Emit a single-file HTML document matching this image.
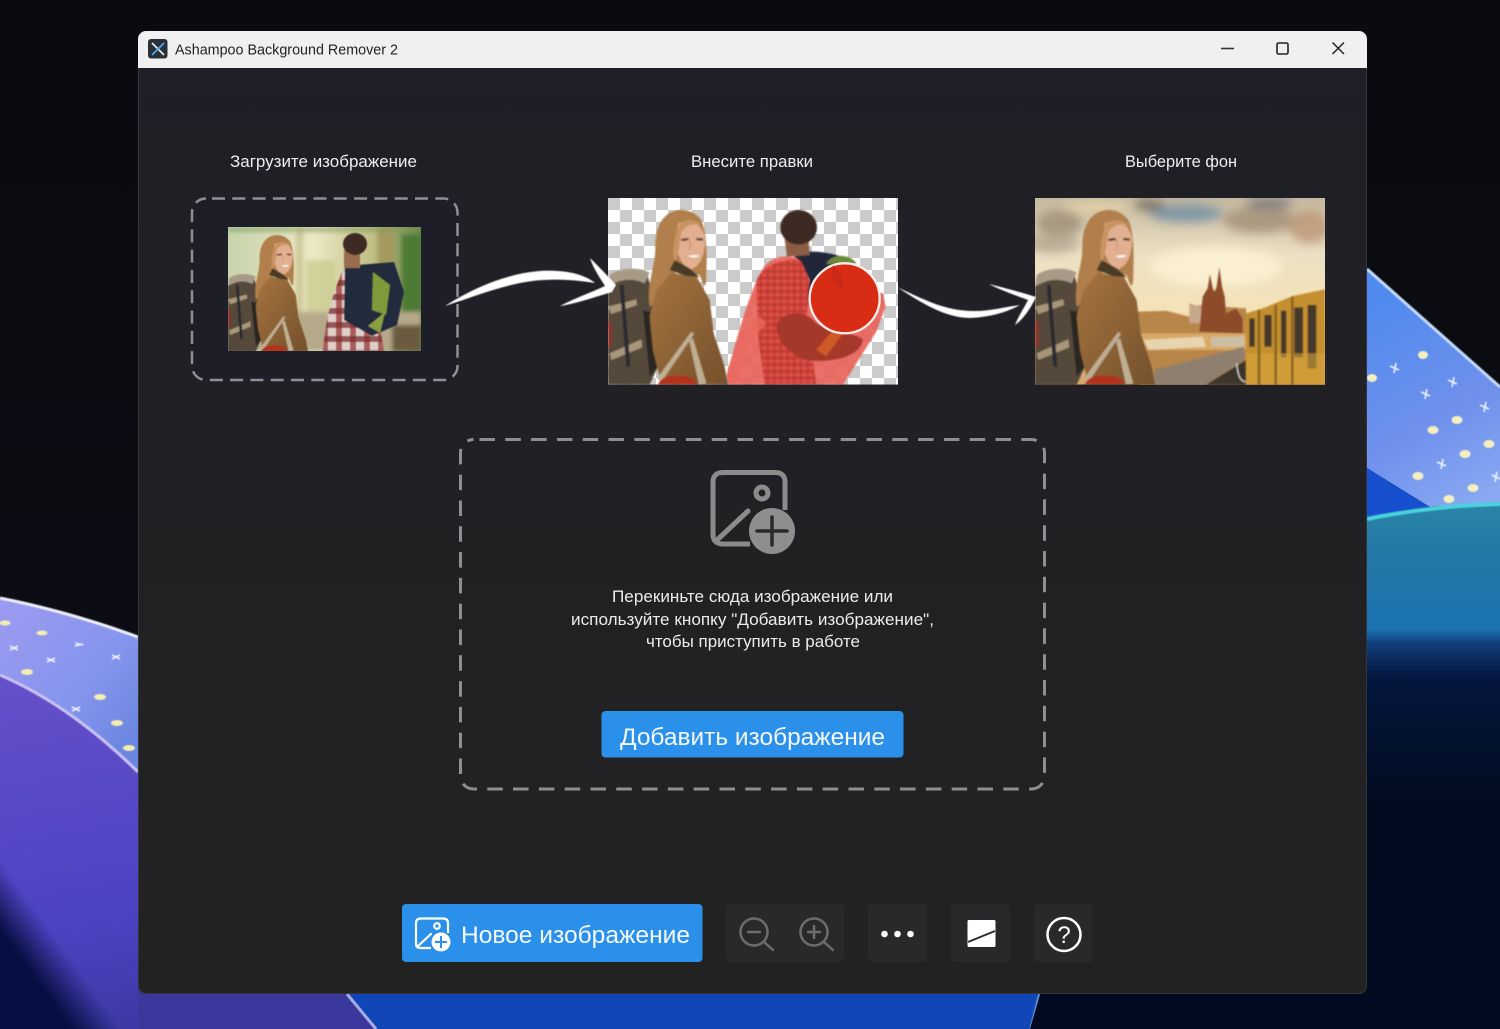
<!DOCTYPE html>
<html lang="ru"><head><meta charset="utf-8"><title>Ashampoo Background Remover 2</title>
<style>html,body{margin:0;padding:0;background:#0b0b12;width:1500px;height:1029px;overflow:hidden}svg{display:block}text{font-family:"Liberation Sans",sans-serif}</style></head>
<body>
<svg xmlns="http://www.w3.org/2000/svg" width="1500" height="1029" viewBox="0 0 1500 1029">
<defs>
<linearGradient id="bgd" x1="0" y1="0" x2="0" y2="1"><stop offset="0" stop-color="#0a0a10"/><stop offset=".6" stop-color="#0c0c14"/><stop offset="1" stop-color="#0a0a14"/></linearGradient>
<linearGradient id="rb" x1="1367" y1="300" x2="1480" y2="500" gradientUnits="userSpaceOnUse"><stop offset="0" stop-color="#4f8aef"/><stop offset=".6" stop-color="#6f90ec"/><stop offset="1" stop-color="#88a8f2"/></linearGradient>
<linearGradient id="rt" x1="0" y1="505" x2="0" y2="800" gradientUnits="userSpaceOnUse"><stop offset="0" stop-color="#2a84a8"/><stop offset=".15" stop-color="#2379a6"/><stop offset=".42" stop-color="#1c72b0"/><stop offset=".47" stop-color="#123e7c"/><stop offset=".58" stop-color="#04173f"/><stop offset="1" stop-color="#020c20"/></linearGradient>
<linearGradient id="lb" x1="0" y1="620" x2="138" y2="740" gradientUnits="userSpaceOnUse"><stop offset="0" stop-color="#9a9af0"/><stop offset=".6" stop-color="#8494ec"/><stop offset="1" stop-color="#6a86e0"/></linearGradient>
<linearGradient id="lp" x1="0" y1="690" x2="60" y2="1029" gradientUnits="userSpaceOnUse"><stop offset="0" stop-color="#6450c8"/><stop offset=".4" stop-color="#5648c6"/><stop offset=".7" stop-color="#4b43c2"/><stop offset="1" stop-color="#3d3aa8"/></linearGradient>
<linearGradient id="navy" x1="0" y1="930" x2="33.400" y2="906" gradientUnits="userSpaceOnUse"><stop offset="0" stop-color="#070e42"/><stop offset="1" stop-color="#070e42" stop-opacity="0"/></linearGradient>
<linearGradient id="win" x1="0" y1="0" x2="0" y2="1"><stop offset="0" stop-color="#1e1f27"/><stop offset=".4" stop-color="#212125"/><stop offset="1" stop-color="#222223"/></linearGradient>
<linearGradient id="jk" x1="0" y1="0" x2="1" y2="1"><stop offset="0" stop-color="#a6743f"/><stop offset="1" stop-color="#74502c"/></linearGradient>
<linearGradient id="sky" x1="0" y1="0" x2="0" y2="1"><stop offset="0" stop-color="#c4b8a0"/><stop offset=".3" stop-color="#ece0c4"/><stop offset=".6" stop-color="#f5e3b8"/><stop offset="1" stop-color="#d5a468"/></linearGradient>
<linearGradient id="for" x1="0" y1="0" x2="1" y2="0"><stop offset="0" stop-color="#c8d4ac"/><stop offset=".45" stop-color="#ece8c4"/><stop offset=".75" stop-color="#c0bf86"/><stop offset="1" stop-color="#5f8040"/></linearGradient>
<pattern id="chk" x="25" y="24" width="72" height="72" patternUnits="userSpaceOnUse"><rect width="72" height="72" fill="#fff"/><rect width="36" height="36" fill="#cbcbcb"/><rect x="36" y="36" width="36" height="36" fill="#cbcbcb"/></pattern>
<pattern id="plaid" width="14" height="14" patternUnits="userSpaceOnUse"><rect width="14" height="14" fill="#e0cfc8"/><rect width="6" height="14" fill="#9d3f3f" opacity=".8"/><rect width="14" height="6" fill="#7c2f30" opacity=".75"/></pattern>
<pattern id="plaidr" width="20" height="20" patternUnits="userSpaceOnUse"><rect width="20" height="20" fill="#e0483e"/><rect width="8" height="20" fill="#b9352c" opacity=".8"/><rect width="20" height="8" fill="#a92e28" opacity=".7"/></pattern>
<filter id="s1" x="-10%" y="-10%" width="120%" height="120%"><feGaussianBlur stdDeviation="2"/></filter>
<filter id="s2" x="-30%" y="-30%" width="160%" height="160%"><feGaussianBlur stdDeviation="14"/></filter>
<filter id="sb" x="-50%" y="-50%" width="200%" height="200%"><feGaussianBlur stdDeviation=".6"/></filter>
<clipPath id="c1"><rect x="228" y="227" width="193" height="124"/></clipPath>
<clipPath id="c2"><rect x="25" y="24" width="870" height="560"/></clipPath>
<clipPath id="win2"><rect x="138" y="31" width="1229" height="963" rx="8"/></clipPath>
<g id="woman" filter="url(#s1)">
<path d="M25,290 C60,250 100,235 140,245 C160,300 170,420 175,530 L150,584 H25Z" fill="#55493a"/>
<path d="M30,255 C60,232 120,230 150,248 L135,280 C95,262 60,268 25,290Z" fill="#a79a86"/>
<path d="M25,350 L110,328 L112,345 L35,372Z M30,490 L125,448 L128,472 L35,510Z" fill="#a8967a"/>
<path d="M60,285 L72,285 L92,530 L80,530Z" fill="#2a2a30"/>
<path d="M130,360 L165,370 L175,530 L150,560Z" fill="#2c2820"/>
<path d="M25,395 L36,395 L36,470 L25,470Z" fill="#8f3226"/>
<path d="M240,60 C190,65 165,110 167,175 C167,230 140,280 150,350 C175,340 210,270 230,245 L300,255 C310,285 320,310 320,250 C322,190 322,130 305,90 C290,70 265,58 240,60Z" fill="#b17f4c"/>
<path d="M235,100 C270,85 312,100 316,150 C316,200 298,232 272,238 C245,228 230,190 230,150Z" fill="#e2b090"/>
<path d="M240,100 C255,88 290,85 310,110 C290,100 265,100 245,125 C240,165 235,200 225,220 C215,190 225,130 240,100Z" fill="#c99462"/>
<path d="M245,150 l22,-3 M290,147 l20,2" stroke="#5a3a30" stroke-width="7" fill="none"/>
<path d="M265,198 Q285,208 300,196 Q285,194 265,198Z" fill="#fff"/>
<path d="M270,150 Q275,175 268,180" stroke="#c08a70" stroke-width="3" fill="none"/>
<path d="M215,248 L292,262 L330,330 L342,430 L375,530 L385,584 H185 L160,480 L150,380 L170,300Z" fill="url(#jk)"/>
<path d="M210,240 L260,258 L300,262 L270,235 L225,210Z" fill="#4a3a28"/>
<path d="M172,565 L275,425 L283,432 L186,575Z M268,450 L280,445 L320,580 L298,584Z" fill="#bfae92"/>
<path d="M175,584 Q185,555 235,556 Q280,556 292,580 V584Z" fill="#b2311f"/>
</g>
<g id="manr" filter="url(#s1)">
<path d="M380,560 C410,450 450,300 490,235 C520,195 560,195 600,205 L640,250 L850,310 L858,350 L830,425 L730,584 H385Z" fill="#e8635a" opacity=".92"/>
<path d="M470,270 C500,215 570,200 615,215 L632,300 L620,380 L650,584 H495 L475,440Z" fill="url(#plaidr)" opacity=".85"/>
<path d="M380,560 C400,470 430,420 480,380 L500,400 C450,450 420,530 410,584 H385Z" fill="#ea6a60" opacity=".8"/>
<path d="M530,400 C560,360 620,360 650,400 C700,430 780,430 790,450 C780,500 700,520 620,510 C560,490 530,450 530,400Z" fill="#a6372c"/>
<path d="M650,480 L700,420 L730,430 L680,498Z" fill="#cf5a26"/>
<path d="M570,190 C620,180 700,180 770,220 L700,240 L640,300 L625,325 L630,270 L605,215Z" fill="#23263a"/>
<path d="M680,222 C695,190 750,190 770,220Z" fill="#6c8a3a"/>
<path d="M552,125 L625,125 L630,195 L562,200Z" fill="#8d5c45"/>
<ellipse cx="597" cy="112" rx="55" ry="52" fill="#3c2a20"/>
</g>
</defs>

<rect width="1500" height="1029" fill="url(#bgd)"/>

<!-- right decoration -->
<path d="M1367,518 Q1430,505 1500,503 V1029 H1367Z" fill="url(#rt)"/>
<path d="M1367,269 L1500,387 V505 Q1460,505 1430,507 L1367,468Z" fill="url(#rb)"/>
<path d="M1367,269 L1500,387" stroke="#c6dbfb" stroke-width="3" fill="none" filter="url(#sb)"/>
<path d="M1367,468 L1430,507 Q1395,512 1367,518Z" fill="#1650cf"/>
<path d="M1367,519 Q1430,506 1500,504" stroke="#49d3dc" stroke-width="4" fill="none" filter="url(#sb)"/>
<g fill="#f5efc0" filter="url(#sb)">
<ellipse cx="1423" cy="355" rx="5" ry="4"/><ellipse cx="1372" cy="378" rx="5" ry="4"/><ellipse cx="1457" cy="420" rx="5.500" ry="4"/><ellipse cx="1433" cy="430" rx="5.500" ry="4"/><ellipse cx="1489" cy="444" rx="5.500" ry="4"/><ellipse cx="1465" cy="454" rx="5.500" ry="4"/><ellipse cx="1418" cy="476" rx="5.500" ry="4"/><ellipse cx="1473" cy="488" rx="5.500" ry="4"/><ellipse cx="1449" cy="499" rx="5.500" ry="4"/>
</g>
<g stroke="#eef4ff" stroke-width="1.600" filter="url(#sb)">
<path d="M1390,366 l9,4 M1396,363 l-2,10 M1448,380 l9,4 M1454,377 l-2,10 M1421,392 l9,4 M1427,389 l-2,10 M1480,405 l9,4 M1486,402 l-2,10 M1437,462 l9,4 M1443,459 l-2,10 M1492,475 l8,4 M1497,472 l-2,10"/>
</g>

<!-- left decoration -->
<path d="M0,598 Q70,612 138,637 V772 Q70,705 0,675Z" fill="url(#lb)"/>
<path d="M0,598 Q70,612 138,637" stroke="#eeeefc" stroke-width="3" fill="none" filter="url(#sb)"/>
<path d="M0,675 Q70,705 138,772 V1029 H0Z" fill="url(#lp)"/>
<path d="M138,772 L360,994 L380,1029 H138Z" fill="#3a389c"/>
<path d="M0,675 Q70,705 138,772" stroke="#c9c3f4" stroke-width="3" fill="none" filter="url(#sb)"/>
<rect x="0" y="840" width="138" height="189" fill="url(#navy)"/>
<path d="M347,994 L375,1029 H1030 L1040,994Z" fill="#1046b8"/>
<path d="M347,994 L376,1029" stroke="#a9abe0" stroke-width="3" fill="none"/>
<path d="M1040,994 L1031,1029" stroke="#7fb0ea" stroke-width="3" fill="none" filter="url(#sb)"/>
<path d="M1040,994 L1030,1029 H1500 V994Z" fill="#010a20"/>
<g fill="#f4eeb0" filter="url(#sb)">
<ellipse cx="5" cy="623" rx="5.500" ry="2.500"/><ellipse cx="42" cy="633" rx="5.500" ry="2.500"/><ellipse cx="27" cy="672" rx="6" ry="3"/><ellipse cx="100" cy="697" rx="6" ry="3"/><ellipse cx="117" cy="723" rx="6" ry="3"/><ellipse cx="129" cy="748" rx="6" ry="3"/>
</g>
<g stroke="#eef2ff" stroke-width="1.600" filter="url(#sb)">
<path d="M10,646 l8,4 M10,650 l8,-4 M47,658 l8,4 M47,662 l8,-4 M75,643 l8,2 M75,646 l8,-2 M112,655 l8,4 M112,659 l8,-4 M72,707 l8,4 M72,711 l8,-4"/>
</g>

<!-- window -->
<rect x="138" y="31" width="1229" height="963" rx="8" fill="url(#win)"/>
<rect x="138.500" y="31.500" width="1228" height="962" rx="8" fill="none" stroke="#35353c" stroke-width="1"/>
<g clip-path="url(#win2)"><rect x="138" y="31" width="1229" height="37" fill="#f0f0f0"/></g>
<rect x="148" y="39" width="19.500" height="19.500" rx="3" fill="#2a3038"/>
<path d="M152,43 L164,55" stroke="#e8e8e8" stroke-width="1.800"/><path d="M164,43 L152,55" stroke="#4ea6ef" stroke-width="1.800"/>
<text x="175" y="54.500" font-size="15" fill="#222" textLength="223" lengthAdjust="spacingAndGlyphs">Ashampoo Background Remover 2</text>
<path d="M1221,48.500 H1234" stroke="#333" stroke-width="1.600"/>
<rect x="1277" y="43" width="11" height="11" rx="1.500" fill="none" stroke="#222" stroke-width="1.600"/>
<path d="M1332.500,42.500 L1344,54 M1344,42.500 L1332.500,54" stroke="#222" stroke-width="1.500"/>

<!-- labels -->
<g fill="#efefef" font-size="16.500">
<text x="230" y="167" textLength="187" lengthAdjust="spacingAndGlyphs">Загрузите изображение</text>
<text x="691" y="167" textLength="122" lengthAdjust="spacingAndGlyphs">Внесите правки</text>
<text x="1125" y="167" textLength="112" lengthAdjust="spacingAndGlyphs">Выберите фон</text>
</g>

<!-- step 1 -->
<rect x="192" y="198.500" width="265.500" height="181.500" rx="14" fill="#1d1e27" stroke="#8f8f94" stroke-width="2.500" stroke-dasharray="13 7.300" stroke-dashoffset="-6"/>
<g clip-path="url(#c1)">
<rect x="228" y="227" width="193" height="124" fill="url(#for)"/>
<g filter="url(#s1)">
<rect x="296" y="227" width="7" height="90" fill="#cfc89a"/><rect x="378" y="227" width="16" height="70" fill="#a59a5e"/>
<rect x="402" y="235" width="19" height="85" fill="#4d7a36"/><rect x="228" y="227" width="193" height="5" fill="#7e9a60" opacity=".6"/>
<rect x="306" y="260" width="30" height="55" fill="#c8c98c" opacity=".7"/>
<path d="M228,312 H421 V351 H228Z" fill="#b5a98a"/><path d="M330,312 H360 V345 H330Z" fill="#e9e0c9"/><path d="M392,325 H421 V351 H392Z" fill="#6b5a40"/>
</g>
<use href="#woman" transform="translate(228,227) scale(.2222) translate(-25,-24)"/>
<g filter="url(#sb)">
<path d="M323,351 C325,325 330,300 342,272 L370,265 L384,351Z" fill="url(#plaid)"/>
<path d="M345,266 L394,262 L404,292 L397,325 L372,336 L344,320Z" fill="#242a3c"/>
<path d="M373,272 L390,285 L386,315 L372,310Z" fill="#7f9a3a"/>
<path d="M368,326 L385,312 L380,333Z" fill="#8aa040"/>
<path d="M344,250 h16 v18 h-16Z" fill="#9a6c50"/>
<ellipse cx="355" cy="244" rx="12" ry="11" fill="#3c2a20"/>
</g>
</g>

<!-- step 2 -->
<g transform="translate(608,198) scale(.33333) translate(-25,-24)" clip-path="url(#c2)">
<rect x="25" y="24" width="870" height="560" fill="url(#chk)"/>
<use href="#manr"/>
<use href="#woman"/>
<circle cx="735" cy="325" r="105" fill="#d92c14" stroke="#f7eeea" stroke-width="7"/>
<path d="M700,225 C720,240 740,280 730,300 C705,300 690,265 700,225Z" fill="#c5281a" opacity=".7"/>
</g>

<!-- step 3 -->
<g transform="translate(1035,198) scale(.33333) translate(-17,-24)">
<svg x="17" y="24" width="870" height="560" viewBox="17 24 870 560">
<rect x="17" y="24" width="870" height="560" fill="url(#sky)"/>
<g filter="url(#s2)">
<ellipse cx="90" cy="100" rx="70" ry="40" fill="#95846f" opacity=".7"/>
<ellipse cx="70" cy="160" rx="80" ry="30" fill="#b0a08c" opacity=".75"/>
<ellipse cx="200" cy="50" rx="100" ry="18" fill="#e8d3a8" opacity=".8"/>
<ellipse cx="470" cy="70" rx="110" ry="28" fill="#6f8da4" opacity=".8"/>
<ellipse cx="360" cy="45" rx="45" ry="18" fill="#6f655a" opacity=".75"/>
<ellipse cx="690" cy="90" rx="110" ry="40" fill="#a38d76" opacity=".8"/>
<ellipse cx="720" cy="40" rx="70" ry="18" fill="#76707a" opacity=".75"/>
<ellipse cx="840" cy="110" rx="60" ry="50" fill="#b99270" opacity=".75"/>
<ellipse cx="560" cy="230" rx="200" ry="60" fill="#fcf2d4" opacity=".8"/>
</g>
<g filter="url(#s1)">
<path d="M320,365 L410,362 L480,380 L510,345 L650,355 L650,584 H330Z" fill="#b98648"/>
<path d="M480,340 L515,350 L515,400 L480,400Z" fill="#c7a88a"/>
<path d="M520,320 L535,295 L542,252 L550,295 L556,305 L562,290 L570,232 L578,290 L586,320 L590,370 L620,355 L640,385 L640,430 L510,425 L515,375Z" fill="#8d4c2a"/>
<rect x="330" y="430" width="320" height="50" fill="#d9a966"/>
<path d="M340,450 L520,440 L530,470 L360,480Z" fill="#e8d5b0"/>
<path d="M545,440 H645 V470 H545Z" fill="#cdbfa5"/>
<path d="M375,584 V540 L645,470 V510 L530,584Z" fill="#8f7f6e"/>
<path d="M530,584 L650,510 V584Z" fill="#3e352c"/>
<path d="M650,370 L700,355 L790,318 L887,298 V584 H650Z" fill="#c48f2f"/>
<path d="M660,385 h16 v85 h-16Z M705,375 h22 v95 h-22Z M755,362 h16 v140 h-16Z M795,352 h26 v150 h-26Z M835,345 h26 v190 h-26Z" fill="#45382a"/>
<path d="M650,490 H887 V584 H650Z" fill="#d7a540" opacity=".6"/>
<path d="M685,360 h8 v224 h-8Z M735,345 h8 v239 h-8Z M785,320 h8 v264 h-8Z" fill="#8a6420"/>
<path d="M622,520 C625,550 630,575 650,575" stroke="#eee" stroke-width="3" fill="none"/>
</g>
<use href="#woman" transform="translate(-8,0)"/>
</svg>
</g>

<!-- arrows -->
<g fill="#fff" filter="url(#sb)">
<path d="M445,306 C478,285 520,268 558,271 C575,272 588,277 595,283 C570,279 545,278 520,283 C495,288 470,298 445,306Z"/>
<path d="M590,258 C600,268 608,276 616,285 L612,292 C595,297 575,304 560,306 C575,298 590,293 605,286 C600,278 593,268 590,258Z"/>
<path d="M897,287 C925,300 945,311 975,311 C990,311 1005,307 1020,305 C1005,313 990,317 970,318 C945,318 920,302 897,287Z"/>
<path d="M989,284 C1005,288 1020,292 1036,297 L1033,303 C1028,312 1022,320 1015,325 C1019,315 1024,308 1028,300 C1015,295 1000,290 989,284Z"/>
</g>

<!-- drop zone -->
<rect x="460.500" y="439.500" width="584" height="349.500" rx="13" fill="none" stroke="#8f8f93" stroke-width="3" stroke-dasharray="15.500 10.300" stroke-dashoffset="-6"/>
<g fill="none" stroke="#8b8b8b" stroke-width="5">
<path d="M785,510 V482 Q785,472.500 775,472.500 H723 Q713,472.500 713,482 V534 Q713,544 723,544 H750"/>
<circle cx="762" cy="493" r="6"/>
<path d="M716,541 L748,511" stroke-linecap="round"/>
</g>
<circle cx="772" cy="531" r="23" fill="#8e8e8e"/>
<path d="M772,517 V545 M757,531 H787" stroke="#2a2a2c" stroke-width="3.500" stroke-linecap="round"/>

<g fill="#ececec" font-size="16.500">
<text x="612" y="602" textLength="281" lengthAdjust="spacingAndGlyphs">Перекиньте сюда изображение или</text>
<text x="571" y="625" textLength="363" lengthAdjust="spacingAndGlyphs">используйте кнопку "Добавить изображение",</text>
<text x="646" y="647" textLength="214" lengthAdjust="spacingAndGlyphs">чтобы приступить в работе</text>
</g>
<rect x="601.500" y="711" width="302" height="46.500" rx="4" fill="#2b90ea"/>
<text x="620" y="745" font-size="24" fill="#f4f8fd" textLength="265" lengthAdjust="spacingAndGlyphs">Добавить изображение</text>

<!-- bottom toolbar -->
<rect x="402" y="904" width="300.500" height="58" rx="4" fill="#2b90ea"/>
<g fill="none" stroke="#fff" stroke-width="2.200">
<path d="M448,933 V923 Q448,918.500 443,918.500 H421 Q416,918.500 416,923 V944 Q416,948 421,948 H431"/>
<circle cx="437" cy="926" r="2.800"/>
<path d="M418,946 L431,934" stroke-linecap="round"/>
</g>
<circle cx="441" cy="942" r="9.500" fill="#fff"/>
<path d="M441,936 V948 M435,942 H447" stroke="#2b90ea" stroke-width="2"/>
<text x="461" y="943" font-size="24" fill="#f4f8fd" textLength="229" lengthAdjust="spacingAndGlyphs">Новое изображение</text>

<rect x="726" y="904" width="118" height="58" rx="3" fill="#29292c"/>
<rect x="868" y="904" width="59" height="58" rx="3" fill="#29292c"/>
<rect x="951" y="904" width="58.500" height="58" rx="3" fill="#29292c"/>
<rect x="1034" y="904" width="58.500" height="58" rx="3" fill="#29292c"/>

<g fill="none" stroke="#6d6d6f" stroke-width="2.500" stroke-linecap="round">
<circle cx="754" cy="932" r="13.500"/><path d="M764,942 L773,950 M748,932 H760"/>
<circle cx="814" cy="932" r="13.500"/><path d="M824,942 L833,950 M808,932 H820 M814,926 V938"/>
</g>
<circle cx="884.500" cy="934" r="3.300" fill="#fff"/><circle cx="897.500" cy="934" r="3.300" fill="#fff"/><circle cx="910.500" cy="934" r="3.300" fill="#fff"/>
<rect x="967.500" y="920" width="28" height="27" rx="1.500" fill="#fff"/>
<path d="M968,942 L995,931" stroke="#29292c" stroke-width="1.800"/>
<circle cx="1064" cy="934.500" r="16.500" fill="none" stroke="#fff" stroke-width="2.500"/>
<text x="1064" y="943" font-size="24" fill="#fff" text-anchor="middle">?</text>
</svg>
</body></html>
